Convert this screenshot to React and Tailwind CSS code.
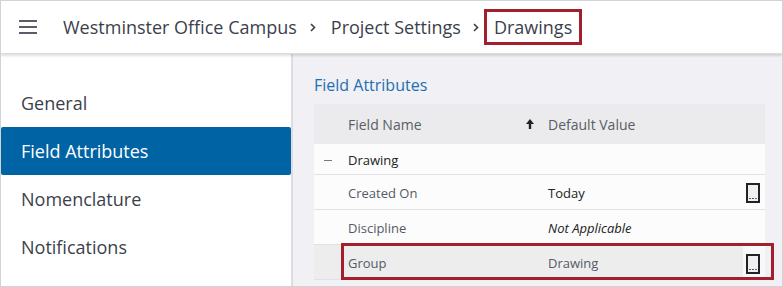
import React from "react";

function Ellipsis() {
  return (
    <div className="w-[14px] h-[20px] border-2 border-[#222] bg-[#efefef] flex items-end justify-center pb-[2px] gap-[1px]">
      <span className="w-[2px] h-[1px] bg-[#8a3a5a]" />
      <span className="w-[2px] h-[1px] bg-[#555]" />
      <span className="w-[2px] h-[1px] bg-[#3a6fb0]" />
    </div>
  );
}

function Chevron() {
  return (
    <svg width="6" height="9" viewBox="0 0 6 9" className="mt-[1px]">
      <path d="M1 1 L4.5 4.5 L1 8" fill="none" stroke="#3b3f4c" strokeWidth="1.6" />
    </svg>
  );
}

export default function App() {
  const font = { fontFamily: '"Open Sans", "Noto Sans", sans-serif' };
  return (
    <div
      className="w-[783px] h-[287px] border border-[#d3d3d6] overflow-hidden flex flex-col bg-white relative"
      style={font}
    >
      {/* Header */}
      <div className="h-[53px] shrink-0 bg-white flex items-center shadow-[0_2px_2px_rgba(0,0,0,0.12)] border-b border-[#dcdce0] relative z-10">
        <div className="ml-[18px] w-[18px] flex flex-col gap-[4px]">
          <span className="h-[2px] bg-[#5a5d68]" />
          <span className="h-[2px] bg-[#5a5d68]" />
          <span className="h-[2px] bg-[#5a5d68]" />
        </div>
        <div className="ml-[26px] flex items-center text-[18px] text-[#3b3f4c]">
          <span>Westminster Office Campus</span>
          <span className="ml-[13px] mr-[15px] flex items-center"><Chevron /></span>
          <span>Project Settings</span>
          <span className="ml-[12px] mr-[5px] flex items-center"><Chevron /></span>
          <span className="border-[3px] border-[#a21f2b] px-[7px] h-[36px] flex items-center">Drawings</span>
        </div>
      </div>

      {/* Body */}
      <div className="flex flex-1 min-h-0">
        {/* Sidebar */}
        <div className="w-[290px] shrink-0 bg-white pt-[25px] flex flex-col">
          {["General", "Field Attributes", "Nomenclature", "Notifications"].map((t) => (
            <div
              key={t}
              className={
                "h-[48px] flex items-center pl-[20px] text-[18px] " +
                (t === "Field Attributes"
                  ? "bg-[#0063a4] text-white rounded-[2px]"
                  : "text-[#3b3f4c]")
              }
            >
              {t}
            </div>
          ))}
        </div>

        {/* Right pane */}
        <div className="flex-1 bg-[#f0f0f5] border-l-2 border-[#dcdce2] pl-[21px] pr-[17px] pt-[18px] relative">
          <div className="text-[16px] text-[#1e6fb0] leading-[24px] h-[32px] pt-[1px]">Field Attributes</div>
          <div className="text-[13px]">
            <div className="h-[40px] bg-[#ebebed] flex items-center text-[#5a5d66] text-[14px]">
              <div className="w-[34px]" />
              <div className="w-[200px] flex items-center justify-between pr-[14px]">
                <span>Field Name</span>
                <svg width="8" height="10" viewBox="0 0 8 10">
                  <path d="M4 0 L8 5 L5.2 5 L5.2 10 L2.8 10 L2.8 5 L0 5 Z" fill="#222" />
                </svg>
              </div>
              <div>Default Value</div>
            </div>
            <div className="h-[31px] bg-[#fcfcfc] flex items-center border-b border-[#e2e2e6] text-[#222] pt-[3px]">
              <div className="w-[34px] pl-[10px]">
                <span className="block w-[8px] h-[1px] bg-[#777]" />
              </div>
              <div>Drawing</div>
            </div>
            <div className="h-[35px] bg-[#fcfcfc] flex items-center border-b border-[#e2e2e6]">
              <div className="w-[34px]" />
              <div className="w-[200px] text-[#555a66] pt-[3px]">Created On</div>
              <div className="flex-1 text-[#222] pt-[3px]">Today</div>
              <div className="w-[25px] flex justify-end pr-[5px] pt-[2px]"><Ellipsis /></div>
            </div>
            <div className="h-[35px] bg-[#fcfcfc] flex items-center border-b border-[#e2e2e6] pt-[3px]">
              <div className="w-[34px]" />
              <div className="w-[200px] text-[#555a66]">Discipline</div>
              <div className="flex-1 italic text-[#222]">Not Applicable</div>
            </div>
            <div className="h-[35px] bg-[#ededee] flex items-center border-b border-[#e2e2e6]">
              <div className="w-[34px]" />
              <div className="w-[200px] text-[#555a66] pt-[3px]">Group</div>
              <div className="flex-1 text-[#555a66] pt-[3px]">Drawing</div>
              <div className="w-[22px] self-stretch bg-[#f8f8f9] flex items-center justify-end pr-[5px] pt-[3px]"><Ellipsis /></div>
            </div>
          </div>
          <div className="absolute left-[48px] top-[189px] w-[433px] h-[37px] border-[3px] border-[#a21f2b] pointer-events-none" />
        </div>
      </div>
    </div>
  );
}
